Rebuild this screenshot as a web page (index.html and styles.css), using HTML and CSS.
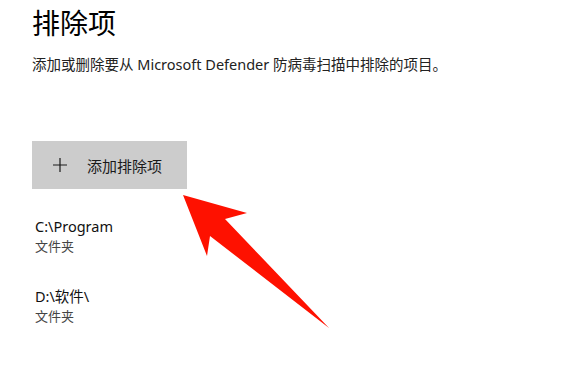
FILE: index.html
```html
<!DOCTYPE html>
<html>
<head>
    <meta charset="utf-8">
    <title>排除项</title>
    <link rel="stylesheet" href="styles.css">
</head>
<body>
    <div class="page">
      <h1 class="title">排除项</h1>
      <p class="desc">添加或删除要从 Microsoft Defender 防病毒扫描中排除的项目。</p>

      <button class="add-btn">
        <span class="plus">
          <svg width="14" height="14" viewBox="0 0 14 14">
            <path d="M7 0 V14 M0 7 H14" stroke="#1a1a1a" stroke-width="1.2" fill="none"/>
          </svg>
        </span>
        <span class="add-label">添加排除项</span>
      </button>

      <div class="items">
        <div class="item">
          <div class="item-name">C:\Program</div>
          <div class="item-type">文件夹</div>
        </div>
        <div class="item">
          <div class="item-name">D:\软件\</div>
          <div class="item-type">文件夹</div>
        </div>
      </div>
    </div>

    <!-- red arrow pointing at the button -->
    <svg class="arrow" width="570" height="386" viewBox="0 0 570 386">
      <polygon points="183,195 247,213 225,219 329,328 210,236 207,256" fill="#fe1100"/>
    </svg>
</body>
</html>
```

FILE: styles.css
```css
body {
  margin: 0;
  background: #ffffff;
  font-family: "Noto Sans", "Noto Sans CJK SC", sans-serif;
  color: #1a1a1a;
}
.page {
  padding: 0 32px;
}
.title {
  margin: 0;
  padding-top: 2px;
  font-size: 28px;
  font-weight: normal;
  line-height: 40px;
  color: #000;
  font-family: "Noto Sans CJK SC", sans-serif;
}
.desc {
  margin: 12px 0 0 0;
  font-size: 14.5px;
  line-height: 20px;
  color: #222;
}
.add-btn {
  margin-top: 67px;
  width: 155px;
  height: 48px;
  border: none;
  background: #cccccc;
  display: flex;
  align-items: center;
  padding: 0 0 0 21px;
  font-family: "Noto Sans", "Noto Sans CJK SC", sans-serif;
  cursor: pointer;
}
.plus {
  display: flex;
  width: 14px;
  height: 14px;
}
.add-label {
  margin-left: 20px;
  font-size: 15px;
  color: #1a1a1a;
}
.items {
  margin-top: 27px;
  padding-left: 3px;
  display: flex;
  flex-direction: column;
  gap: 30px;
}
.item-name {
  font-size: 14.5px;
  line-height: 20px;
  color: #111;
}
.item-type {
  font-size: 13px;
  line-height: 20px;
  color: #444;
}
.arrow {
  position: absolute;
  left: 0;
  top: 0;
  pointer-events: none;
}
```
